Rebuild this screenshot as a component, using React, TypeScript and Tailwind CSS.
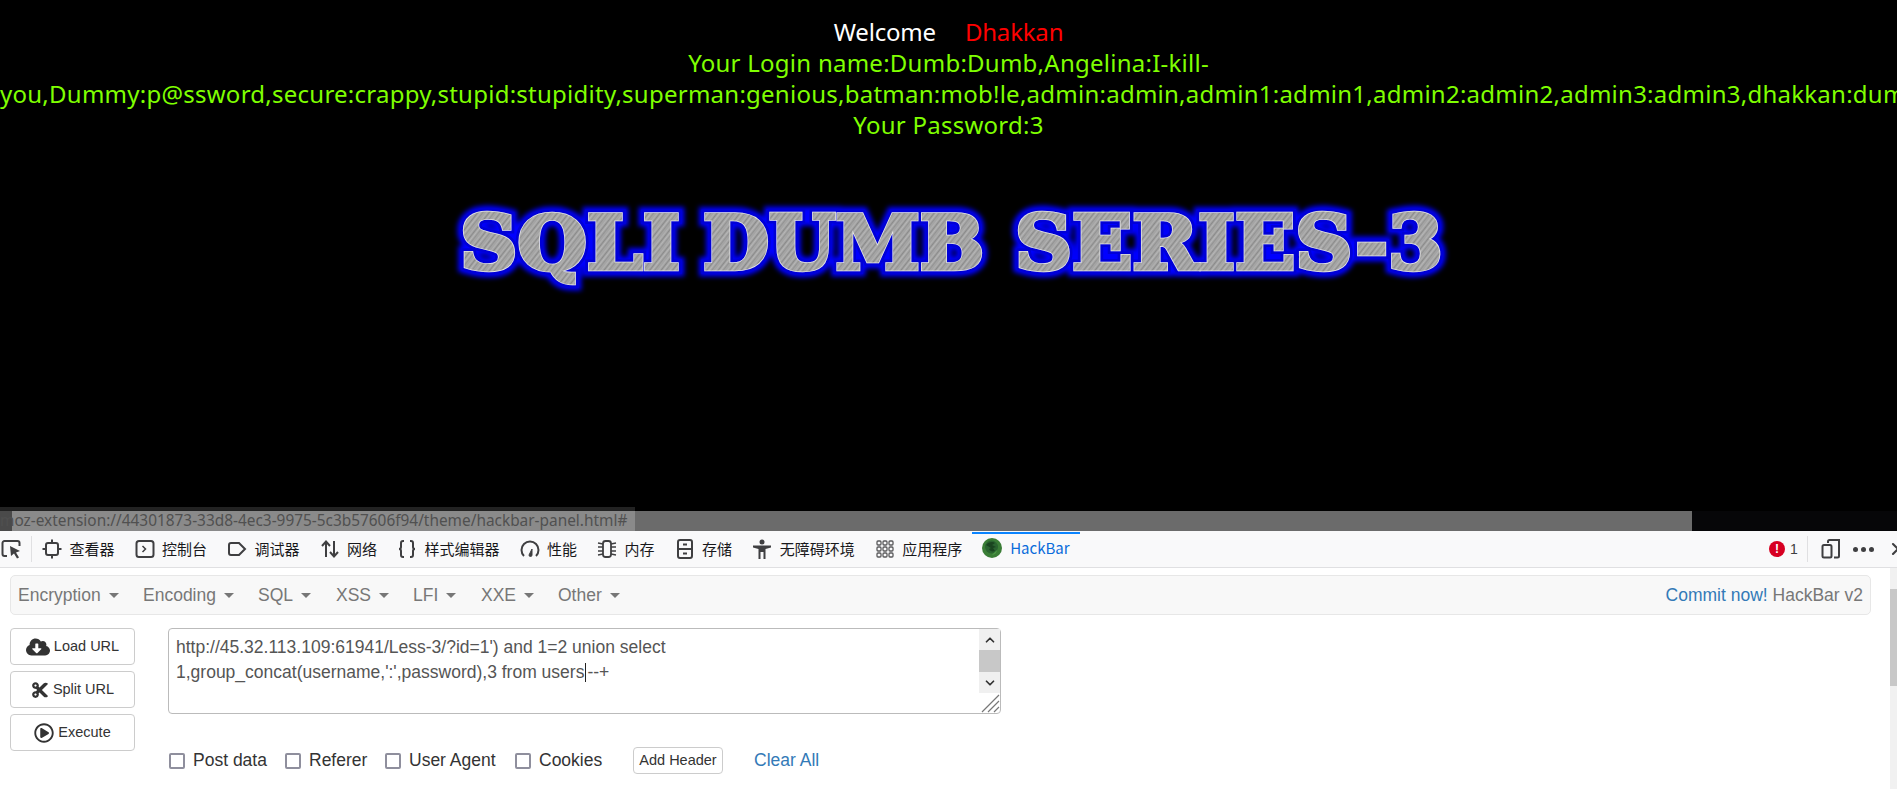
import React from 'react';
import { FaCloudDownloadAlt, FaCut, FaRegPlayCircle } from 'react-icons/fa';
import { ChevronUp, ChevronDown, X } from 'lucide-react';

const ui = { fontFamily: '"Liberation Sans", Arial, sans-serif' };
const zh = { fontFamily: '"Noto Sans CJK SC", "Noto Sans", sans-serif' };

const titleWords = [
  { text: 'SQLI', x: 460, len: 220 },
  { text: 'DUMB', x: 703, len: 281 },
  { text: 'SERIES-3', x: 1015, len: 428 },
];

function TitleLayer(props: React.SVGProps<SVGGElement>) {
  return (
    <g {...props}>
      {titleWords.map((w) => (
        <text key={w.text} x={w.x} y={89} textLength={w.len} lengthAdjust="spacingAndGlyphs" fontSize={75} fontWeight={700} fontFamily='"DejaVu Serif", serif'>
          {w.text}
        </text>
      ))}
    </g>
  );
}

function Title() {
  return (
    <svg viewBox="0 0 1897 120" className="block w-[1897px] h-[120px] mt-[40px]">
      <defs>
        <pattern id="brushed" width="9" height="9" patternUnits="userSpaceOnUse" patternTransform="rotate(-52)">
          <rect width="9" height="9" fill="#a4a4a4" />
          <rect width="9" height="1" fill="#8a8a8a" />
          <rect y="2" width="9" height="1" fill="#b6b6b6" />
          <rect y="4" width="9" height="1" fill="#939393" />
          <rect y="7" width="9" height="1" fill="#b0b0b0" />
        </pattern>
        <filter id="glow" x="-5%" y="-30%" width="110%" height="160%">
          <feGaussianBlur stdDeviation="2.5" />
        </filter>
      </defs>
      <TitleLayer fill="#0000ff" stroke="#0000ff" strokeWidth={15} filter="url(#glow)" />
      <TitleLayer fill="#0000d8" stroke="#0000d8" strokeWidth={10} />
      <TitleLayer fill="#e8e8e8" stroke="#e8e8e8" strokeWidth={4.500} />
      <TitleLayer fill="url(#brushed)" stroke="url(#brushed)" strokeWidth={3} />
    </svg>
  );
}

const ico = 'w-[20px] h-[20px] shrink-0';

function PickIcon() {
  return (
    <svg viewBox="0 0 22 22" className="w-[22px] h-[22px] ml-[1px]" fill="none" stroke="#3f3f41" strokeWidth="2">
      <path d="M6 18H3.500A2 2 0 0 1 1.500 16V5a2 2 0 0 1 2-2h13a2 2 0 0 1 2 2v3" />
      <path d="M9 8l10 5-4 1.500 3 5-2 1-3-5-3 2.500z" fill="#3f3f41" stroke="none" />
    </svg>
  );
}
function InspectorIcon() {
  return (
    <svg viewBox="0 0 20 20" className={ico} fill="none" stroke="#3f3f41" strokeWidth="2">
      <rect x="4" y="4" width="12" height="12" rx="2" />
      <path d="M10 0.500v3.500M10 16v3.500M0.500 10h3.500M16 10h3.500" />
    </svg>
  );
}
function ConsoleIcon() {
  return (
    <svg viewBox="0 0 20 20" className={ico} fill="none" stroke="#3f3f41" strokeWidth="2">
      <rect x="1.500" y="2" width="17" height="16" rx="2.500" />
      <path d="M7.500 7l3 3-3 3" strokeWidth="1.500" />
    </svg>
  );
}
function DebuggerIcon() {
  return (
    <svg viewBox="0 0 20 20" className={ico} fill="none" stroke="#3f3f41" strokeWidth="2">
      <path d="M2 6a2 2 0 0 1 2-2h8l6 6-6 6H4a2 2 0 0 1-2-2z" />
    </svg>
  );
}
function NetworkIcon() {
  return (
    <svg viewBox="0 0 20 20" className={ico} fill="none" stroke="#3f3f41" strokeWidth="2">
      <path d="M6 18V3M2 7l4-4.500L10 7" />
      <path d="M14 2v15M10 13l4 4.500 4-4.500" />
    </svg>
  );
}
function StyleIcon() {
  return (
    <svg viewBox="0 0 20 20" className={ico} fill="none" stroke="#3f3f41" strokeWidth="2">
      <path d="M7 2H6a2 2 0 0 0-2 2v4a2 2 0 0 1-2 2 2 2 0 0 1 2 2v4a2 2 0 0 0 2 2h1" />
      <path d="M13 2h1a2 2 0 0 1 2 2v4a2 2 0 0 0 2 2 2 2 0 0 0-2 2v4a2 2 0 0 1-2 2h-1" />
    </svg>
  );
}
function PerfIcon() {
  return (
    <svg viewBox="0 0 20 20" className={ico} fill="none" stroke="#3f3f41" strokeWidth="2">
      <path d="M4 17a8.500 8.500 0 1 1 12 0" />
      <path d="M9 16l3-6 0 6a1.500 1.500 0 0 1-3 0z" fill="#3f3f41" strokeWidth="1" />
    </svg>
  );
}
function MemoryIcon() {
  return (
    <svg viewBox="0 0 20 20" className={ico} fill="none" stroke="#3f3f41" strokeWidth="1.800">
      <rect x="6" y="2" width="8" height="16" rx="2.500" />
      <path d="M1 4l5 1M1 8h5M1 12h5M1 16l5-1M14 5l5-1M14 8h5M14 12h5M14 15l5 1" strokeWidth="1.300" />
    </svg>
  );
}
function StorageIcon() {
  return (
    <svg viewBox="0 0 20 20" className={ico} fill="none" stroke="#3f3f41" strokeWidth="2">
      <rect x="3" y="1" width="14" height="18" rx="2" />
      <path d="M3 10h14M8 5.500h4M8 14.500h4" />
    </svg>
  );
}
function A11yIcon() {
  return (
    <svg viewBox="0 0 20 20" className={ico} fill="#3f3f41">
      <circle cx="10" cy="3" r="2.500" />
      <path d="M1 6.500h18v2l-5.500 1.500v10h-2v-7h-3v7h-2V10L1 8.500z" />
    </svg>
  );
}
function AppsIcon() {
  return (
    <svg viewBox="0 0 20 20" className={ico} fill="none" stroke="#5a5a5c" strokeWidth="1.300">
      {[2, 8, 14].flatMap((y) =>
        [2, 8, 14].map((x) => <rect key={`${x}-${y}`} x={x} y={y} width="4" height="4" rx="1" />),
      )}
    </svg>
  );
}
function HackBarIcon() {
  return (
    <svg viewBox="0 0 20 20" className={ico}>
      <circle cx="10" cy="10" r="10" fill="#3a7d36" />
      <circle cx="9.500" cy="9" r="6.500" fill="#2a6330" />
      <path d="M4 7c2-3 7-4 9-2l-3 2 4 2-3 1 2 3c-3 1-5 0-6-2l2-1z" fill="#1a4420" />
      <path d="M15 12a6 6 0 0 1-5 5l3-3z" fill="#4f9a48" />
    </svg>
  );
}

const tabs: [React.ReactNode, string][] = [
  [<InspectorIcon />, '查看器'],
  [<ConsoleIcon />, '控制台'],
  [<DebuggerIcon />, '调试器'],
  [<NetworkIcon />, '网络'],
  [<StyleIcon />, '样式编辑器'],
  [<PerfIcon />, '性能'],
  [<MemoryIcon />, '内存'],
  [<StorageIcon />, '存储'],
  [<A11yIcon />, '无障碍环境'],
  [<AppsIcon />, '应用程序'],
];

function Toolbar() {
  return (
    <div className="flex items-center h-[37px] bg-[#f9f9fa] border-b border-[#e0e0e2] text-[15px] text-[#18181a] shrink-0" style={zh}>
      <div className="w-[32px] flex items-center h-[26px] border-r border-[#e0e0e2]">
        <PickIcon />
      </div>
      {tabs.map(([icon, label]) => (
        <div key={label} className="flex items-center gap-[7.500px] px-[10px] whitespace-nowrap">
          {icon}
          <span>{label}</span>
        </div>
      ))}
      <div className="flex items-center gap-[8px] px-[10px] h-full pb-[2px] text-[#0a6cdb] whitespace-nowrap relative">
        <span className="absolute left-0 right-0 top-[1px] h-[2px] bg-[#0a84ff]" />
        <HackBarIcon />
        <span>HackBar</span>
      </div>
      <div className="ml-auto flex items-center">
        <span className="w-[16px] h-[16px] rounded-full bg-[#d70022] text-white text-[12px] font-bold flex items-center justify-center" style={ui}>!</span>
        <span className="ml-[5px] w-[17px] text-[14px] text-[#3f3f41]" style={ui}>1</span>
        <div className="w-px h-[26px] bg-[#e0e0e2]" />
        <svg viewBox="0 0 20 20" className="w-[20px] h-[20px] ml-[13px]" fill="none" stroke="#3f3f41" strokeWidth="2">
          <path d="M7 4V2.500A1.500 1.500 0 0 1 8.500 1H18v16a1.500 1.500 0 0 1-1.500 1.500H13" />
          <rect x="1.500" y="6" width="9" height="12.500" rx="1.500" />
        </svg>
        <span className="ml-[12px] flex gap-[3px]">
          <i className="w-[5px] h-[5px] rounded-full bg-[#3f3f41]" />
          <i className="w-[5px] h-[5px] rounded-full bg-[#3f3f41]" />
          <i className="w-[5px] h-[5px] rounded-full bg-[#3f3f41]" />
        </span>
        <X className="w-[20px] h-[20px] ml-[14px] -mr-[11px] text-[#3f3f41]" strokeWidth={2.5} />
      </div>
    </div>
  );
}

const menus = [
  ['Encryption', 125],
  ['Encoding', 115],
  ['SQL', 78],
  ['XSS', 77],
  ['LFI', 68],
  ['XXE', 77],
  ['Other', 70],
] as const;

function MenuBar() {
  return (
    <div className="flex items-center h-[40px] mt-[7px] ml-[10px] mr-[26px] pl-[7px] pr-[7px] bg-[#f8f8f8] border border-[#e7e7e7] rounded-[5px] text-[17.500px] text-[#777]">
      {menus.map(([name, w]) => (
        <div key={name} className="flex items-center gap-[8px]" style={{ width: w }}>
          {name}
          <span className="w-0 h-0 border-x-[5px] border-x-transparent border-t-[5px] border-t-[#777]" />
        </div>
      ))}
      <div className="ml-auto">
        <span className="text-[#337ab7]">Commit now!</span> HackBar v2
      </div>
    </div>
  );
}

function SideButton({ icon, label }: { icon: React.ReactNode; label: string }) {
  return (
    <button className="flex items-center justify-center gap-[4px] w-[125px] h-[37px] bg-white border border-[#ccc] rounded text-[14.500px] text-[#333]">
      {icon}
      {label}
    </button>
  );
}

function UrlBox() {
  return (
    <div className="flex w-[833px] h-[86px] bg-white border border-[#bbb] rounded text-[17.500px] leading-[25px] text-[#555]">
      <div className="flex-1 pl-[7px] pt-[6px]">
        <div>http://45.32.113.109:61941/Less-3/?id=1') and 1=2 union select</div>
        <div>
          1,group_concat(username,':',password),3 from users
          <span className="inline-block w-px h-[19px] bg-[#222] align-[-4px] mx-[1px]" />
          --+
        </div>
      </div>
      <div className="flex flex-col w-[21px]">
        <div className="h-[21px] bg-[#f0f0f0] flex items-center justify-center">
          <ChevronUp className="w-[14px] h-[14px] text-[#333]" strokeWidth={3} />
        </div>
        <div className="h-[22px] bg-[#c8c8c8]" />
        <div className="h-[21px] bg-[#f0f0f0] flex items-center justify-center">
          <ChevronDown className="w-[14px] h-[14px] text-[#333]" strokeWidth={3} />
        </div>
        <div className="flex-1 flex items-end justify-end">
          <svg viewBox="0 0 20 20" className="w-[20px] h-[20px]" stroke="#777" strokeWidth="1.200">
            <path d="M2 19L19 2M8 19L19 8M14 19l5-5" />
          </svg>
        </div>
      </div>
    </div>
  );
}

function Check({ label, w }: { label: string; w: number }) {
  return (
    <label className="flex items-center gap-[8px] text-[17.500px] text-[#333] whitespace-nowrap" style={{ width: w }}>
      <input type="checkbox" className="appearance-none w-[16px] h-[16px] border-2 border-[#8f8f9d] rounded-[2px] bg-white" />
      {label}
    </label>
  );
}

function HackBar() {
  return (
    <div className="flex-1 relative bg-white" style={ui}>
      <MenuBar />
      <div className="flex mt-[13px] ml-[10px]">
        <div className="flex flex-col gap-[6px] w-[125px]">
          <SideButton icon={<FaCloudDownloadAlt className="w-[24px] h-[24px]" />} label="Load URL" />
          <SideButton icon={<FaCut className="w-[18px] h-[18px]" />} label="Split URL" />
          <SideButton icon={<FaRegPlayCircle className="w-[20px] h-[20px]" />} label="Execute" />
        </div>
        <div className="ml-[33px]">
          <UrlBox />
          <div className="flex items-center mt-[33px] pl-[1px]">
            <Check label="Post data" w={116} />
            <Check label="Referer" w={100} />
            <Check label="User Agent" w={130} />
            <Check label="Cookies" w={118} />
            <button className="w-[90px] h-[27px] bg-white border border-[#ccc] rounded text-[14.500px] text-[#333]">Add Header</button>
            <span className="ml-[31px] text-[17.500px] text-[#337ab7]">Clear All</span>
          </div>
        </div>
      </div>
      {/* page scrollbar */}
      <div className="absolute top-0 right-0 bottom-0 w-[7px] bg-[#f1f1f1]">
        <div className="mt-[21px] h-[97px] bg-[#c8c8c8]" />
      </div>
    </div>
  );
}

function StatusBar() {
  return (
    <div className="absolute left-0 right-0 bottom-0 h-[24px] text-[15.400px] text-[#505050]" style={{ fontFamily: '"Noto Sans", sans-serif' }}>
      <div className="w-[635px] h-[4px] bg-[#222]" />
      <div className="flex h-[20px]">
        <div className="w-[12px] bg-[#4a4a4a]" />
        <div className="w-[623px] bg-[#8a8a8a] whitespace-nowrap leading-[20px]">
          <span className="-ml-[12px] inline-block">moz-extension://44301873-33d8-4ec3-9975-5c3b57606f94/theme/hackbar-panel.html#</span>
        </div>
        <div className="w-[1057px] bg-[#6b6b6b]" />
        <div className="flex-1 bg-[#060608]" />
      </div>
    </div>
  );
}

export default function App() {
  return (
    <div className="w-full h-screen flex flex-col overflow-hidden bg-white">
      <div className="relative h-[531px] shrink-0 bg-black overflow-hidden">
        <div className="pt-[16px] text-center text-[24px] leading-[31px] text-[#7fff00] tracking-[0.25px]" style={{ fontFamily: '"Noto Sans", sans-serif' }}>
          <div className="tracking-[-0.2px]">
            <span className="text-white">Welcome</span>
            <span className="inline-block w-[29px]" />
            <span className="text-[#ff0000]">Dhakkan</span>
          </div>
          <div>
            Your Login name:Dumb:Dumb,Angelina:I-kill-you,Dummy:p@ssword,secure:crappy,stupid:stupidity,superman:genious,batman:mob!le,admin:admin,admin1:admin1,admin2:admin2,admin3:admin3,dhakkan:dumbo
          </div>
          <div>Your Password:3</div>
        </div>
        <Title />
        <StatusBar />
      </div>
      <Toolbar />
      <HackBar />
    </div>
  );
}
